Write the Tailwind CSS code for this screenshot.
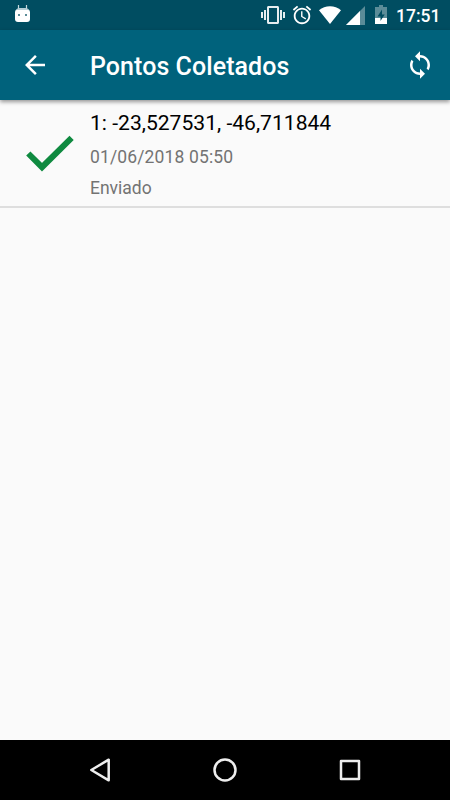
<!DOCTYPE html>
<html lang="pt-BR">
<head>
    <meta charset="UTF-8">
    <meta name="viewport" content="width=device-width, initial-scale=1.0">
    <title>Pontos Coletados</title>
    <script src="https://cdn.jsdelivr.net/npm/@tailwindcss/browser@4"></script>
</head>
<body class="flex h-[800px] w-[450px] flex-col overflow-hidden bg-[#fafafa] font-[Roboto,sans-serif]">

    <!-- Status bar -->
    <div class="flex h-[30px] shrink-0 items-center bg-[#004d61] pr-[10px] pl-[14px] text-white">
        <svg class="h-[20px] w-[17px]" viewBox="0 0 17 20" fill="currentColor">
            <path d="M4.500 0v4M12.500 0v4" stroke="#c3d7dc" stroke-width="1.200"/>
            <path d="M1.500 6C2 3.500 4 3 8.500 3S15 3.500 15.500 6z" fill="#b5ced5"/>
            <path d="M3 5h11q2 0 2 2v7q0 3-3 3H4q-3 0-3-3V7q0-2 2-2z"/>
            <path d="M4 9h2v2H4zM11 9h2v2h-2z" fill="#5b8c98"/>
        </svg>
        <div class="ml-auto flex items-center">
            <svg class="h-[24px] w-[24px]" viewBox="0 0 24 24" fill="#e6edef">
                <path d="M0 15h2V9H0v6zm3 2h2V7H3v10zm19-8v6h2V9h-2zm-3 8h2V7h-2v10zM16.500 3h-9C6.670 3 6 3.670 6 4.500v15c0 .83.67 1.500 1.500 1.500h9c.83 0 1.500-.67 1.500-1.500v-15c0-.83-.67-1.500-1.500-1.500zM16 19H8V5h8v14z"/>
            </svg>
            <svg class="ml-[6px] h-[22px] w-[22px]" viewBox="0 0 24 24" fill="currentColor">
                <path d="M22 5.720l-4.600-3.860-1.290 1.530 4.600 3.860L22 5.720zM7.880 3.390L6.600 1.860 2 5.710l1.290 1.530 4.590-3.850zM12.500 8H11v6l4.750 2.850.75-1.230-4-2.370V8zM12 4c-4.970 0-9 4.030-9 9s4.020 9 9 9c4.970 0 9-4.030 9-9s-4.030-9-9-9zm0 16c-3.870 0-7-3.130-7-7s3.130-7 7-7 7 3.130 7 7-3.130 7-7 7z"/>
            </svg>
            <svg class="ml-[6px] h-[18px] w-[22px]" viewBox="0 0 22 18" fill="currentColor">
                <path d="M11 18L0 4.300Q4.800.3 11 .3T22 4.300z"/>
            </svg>
            <svg class="ml-[5px] h-[19px] w-[19px]" viewBox="0 0 19 19">
                <path d="M0 19L19 0v19z" fill="#5b8c98"/>
                <path d="M0 19L14 5v14z" fill="#fff"/>
            </svg>
            <svg class="ml-[10px] h-[20px] w-[12px]" viewBox="0 0 12 20">
                <path d="M4 0h4v2h4v17H0V2h4z" fill="#5b8c98"/>
                <path d="M0 13h12v6H0z" fill="#fff"/>
                <path d="M7 4.500L2.500 11.500h3V16L9.700 9.500H7z" fill="#004d61"/>
            </svg>
            <span class="mt-[1px] ml-[9px] w-[44px] text-[17.500px] leading-[30px] font-medium whitespace-nowrap">17:51</span>
        </div>
    </div>

    <!-- App bar -->
    <header class="z-10 flex h-[70px] shrink-0 items-center bg-[#00627c] pr-[15px] pl-[20px] text-white shadow-[0_2px_4px_rgba(0,0,0,0.4)]">
        <svg class="h-[30px] w-[30px]" viewBox="0 0 24 24" fill="currentColor">
            <path d="M20 11H7.830l5.590-5.590L12 4l-8 8 8 8 1.410-1.410L7.830 13H20v-2z"/>
        </svg>
        <h1 class="mt-[3px] ml-[40px] flex-1 text-[25px] leading-[30px] font-medium tracking-[0.06px]">Pontos Coletados</h1>
        <svg class="h-[30px] w-[30px]" viewBox="0 0 24 24" fill="currentColor">
            <path d="M12 4V1L8 5l4 4V6c3.310 0 6 2.690 6 6 0 1.010-.25 1.970-.7 2.800l1.460 1.460C19.540 15.030 20 13.570 20 12c0-4.420-3.580-8-8-8zm0 14c-3.310 0-6-2.690-6-6 0-1.010.25-1.970.7-2.800L5.240 7.740C4.460 8.970 4 10.430 4 12c0 4.420 3.580 8 8 8v3l4-4-4-4v3z"/>
        </svg>
    </header>

    <!-- Collected points -->
    <main class="flex-1">
        <div class="flex h-[108px] items-center border-b-2 border-[#dedede] pl-[17px]">
            <svg class="h-[65px] w-[65px]" viewBox="0 0 65 65" fill="none" stroke="#0f8a40" stroke-width="6">
                <path d="M11.300 32.500L25 46.200 54.600 16.800"/>
            </svg>
            <div class="ml-[8px] pt-[4px]">
                <p class="text-[21.100px] leading-[32px] text-black">1: -23,527531, -46,711844</p>
                <p class="mt-[3px] text-[17.500px] leading-[31px] tracking-[0.140px] text-[#737373]">01/06/2018 05:50</p>
                <p class="text-[17.500px] leading-[31px] text-[#737373]">Enviado</p>
            </div>
        </div>
    </main>

    <!-- Navigation bar -->
    <nav class="flex h-[60px] shrink-0 items-center justify-center gap-[95px] bg-black">
        <svg class="h-[30px] w-[30px]" viewBox="0 0 30 30" fill="none" stroke="#eee" stroke-width="2.500" stroke-linejoin="round">
            <path d="M6.300 15L23.700 4.700v20.600z"/>
        </svg>
        <svg class="h-[30px] w-[30px]" viewBox="0 0 30 30" fill="none" stroke="#eee" stroke-width="2.500">
            <circle cx="15" cy="15" r="10.500"/>
        </svg>
        <svg class="h-[30px] w-[30px]" viewBox="0 0 30 30" fill="none" stroke="#eee" stroke-width="2.500" stroke-linejoin="round">
            <path d="M6 6h18v18H6z"/>
        </svg>
    </nav>

</body>
</html>
